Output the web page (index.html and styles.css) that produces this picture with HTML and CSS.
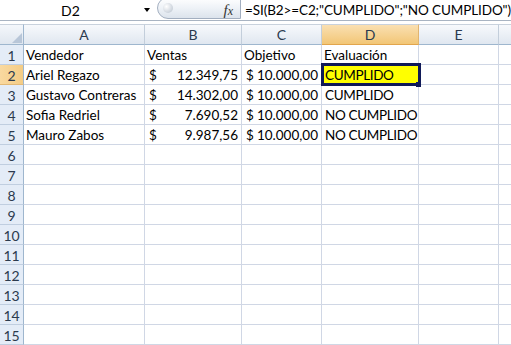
FILE: index.html
```html
<!DOCTYPE html>
<html lang="es">
<head>
<meta charset="utf-8">
<title>Evaluación</title>
<link rel="stylesheet" href="styles.css">
</head>
<body>
<div class="formula-bar">
  <div class="namebox">D2</div>
  <div class="dropdown"></div>
  <div class="fx-pill"><span class="knob"></span><span class="fx"><i>f</i><span class="x">x</span></span></div>
  <div class="formula">=SI(B2&gt;=C2;"CUMPLIDO";"NO CUMPLIDO")</div>
</div>
<div class="sheet">
  <div class="corner"><span class="tri"></span></div>
  <div class="ch">A</div><div class="ch">B</div><div class="ch">C</div><div class="ch sel">D</div><div class="ch">E</div><div class="ch last"></div>

  <div class="rh">1</div><div class="c">Vendedor</div><div class="c">Ventas</div><div class="c">Objetivo</div><div class="c">Evaluación</div><div class="c"></div><div class="c last"></div>
  <div class="rh sel">2</div><div class="c">Ariel Regazo</div><div class="c money"><span>$</span><span>12.349,75</span></div><div class="c money"><span>$</span><span>10.000,00</span></div><div class="c caps active">CUMPLIDO</div><div class="c"></div><div class="c last"></div>
  <div class="rh">3</div><div class="c">Gustavo Contreras</div><div class="c money"><span>$</span><span>14.302,00</span></div><div class="c money"><span>$</span><span>10.000,00</span></div><div class="c caps">CUMPLIDO</div><div class="c"></div><div class="c last"></div>
  <div class="rh">4</div><div class="c">Sofia Redriel</div><div class="c money"><span>$</span><span>7.690,52</span></div><div class="c money"><span>$</span><span>10.000,00</span></div><div class="c caps">NO CUMPLIDO</div><div class="c"></div><div class="c last"></div>
  <div class="rh">5</div><div class="c">Mauro Zabos</div><div class="c money"><span>$</span><span>9.987,56</span></div><div class="c money"><span>$</span><span>10.000,00</span></div><div class="c caps">NO CUMPLIDO</div><div class="c"></div><div class="c last"></div>
  <div class="rh">6</div><div class="c"></div><div class="c"></div><div class="c"></div><div class="c"></div><div class="c"></div><div class="c last"></div>
  <div class="rh">7</div><div class="c"></div><div class="c"></div><div class="c"></div><div class="c"></div><div class="c"></div><div class="c last"></div>
  <div class="rh">8</div><div class="c"></div><div class="c"></div><div class="c"></div><div class="c"></div><div class="c"></div><div class="c last"></div>
  <div class="rh">9</div><div class="c"></div><div class="c"></div><div class="c"></div><div class="c"></div><div class="c"></div><div class="c last"></div>
  <div class="rh">10</div><div class="c"></div><div class="c"></div><div class="c"></div><div class="c"></div><div class="c"></div><div class="c last"></div>
  <div class="rh">11</div><div class="c"></div><div class="c"></div><div class="c"></div><div class="c"></div><div class="c"></div><div class="c last"></div>
  <div class="rh">12</div><div class="c"></div><div class="c"></div><div class="c"></div><div class="c"></div><div class="c"></div><div class="c last"></div>
  <div class="rh">13</div><div class="c"></div><div class="c"></div><div class="c"></div><div class="c"></div><div class="c"></div><div class="c last"></div>
  <div class="rh">14</div><div class="c"></div><div class="c"></div><div class="c"></div><div class="c"></div><div class="c"></div><div class="c last"></div>
  <div class="rh">15</div><div class="c"></div><div class="c"></div><div class="c"></div><div class="c"></div><div class="c"></div><div class="c last"></div>
</div>
</body>
</html>
```

FILE: styles.css
```css
*, *::before, *::after { box-sizing: border-box; }
html, body { margin: 0; padding: 0; background: #fff; }
body {
  width: 511px;
  height: 345px;
  overflow: hidden;
  font-family: Lato, "Liberation Sans", sans-serif;
  font-size: 13.5px;
  color: #000;
}

/* formula bar */
.formula-bar {
  display: flex;
  align-items: center;
  height: 21px;
  border-bottom: 1px solid #a9b4c2;
  margin-bottom: 3px;
  overflow: hidden;
  white-space: nowrap;
}
.formula-bar > * { flex-shrink: 0; }
.namebox { width: 141px; text-align: center; line-height: 17px; font-size: 14px; }
.dropdown {
  width: 16px;
  height: 20px;
  display: flex;
  align-items: center;
  padding-left: 3px;
}
.dropdown::before {
  content: "";
  border-left: 3.5px solid transparent;
  border-right: 3.5px solid transparent;
  border-top: 4px solid #000;
}
.fx-pill {
  align-self: flex-start;
  width: 84px;
  height: 22px;
  margin-top: -3px;
  border: 1px solid #a3afc0;
  border-radius: 11px 0 0 11px;
  background: linear-gradient(#ffffff, #eef2f7 50%, #dce3ec);
  display: flex;
  align-items: center;
  justify-content: space-between;
  padding: 0 7px 0 5px;
}
.knob {
  width: 10px;
  height: 10px;
  border-radius: 50%;
  background: radial-gradient(circle at 35% 35%, #ffffff, #d3d9e1 60%, #b7c0cc);
}
.fx {
  margin-top: 5px;
  font-family: "Liberation Serif", serif;
  font-size: 15px;
  line-height: 14px;
  color: #333;
}
.fx i { font-style: italic; }
.fx .x { font-style: italic; font-size: 12px; }
.formula { padding-left: 4px; line-height: 17px; letter-spacing: -0.1px; }

/* sheet */
.sheet {
  display: grid;
  grid-template-columns: 24px 121px 97px 80px 97px 80px 1fr;
  grid-template-rows: 21px repeat(15, 20px);
}
.sheet > div {
  display: flex;
  align-items: flex-end;
  border-right: 1px solid #d0d7e5;
  border-bottom: 1px solid #d0d7e5;
  line-height: 17px;
  white-space: nowrap;
  padding: 0 2px;
}
.sheet > .last { border-right: none; }

.corner {
  border-top: 1px solid #c9d2dd;
  border-right-color: #9eb6ce !important;
  border-bottom-color: #9eb6ce !important;
  background: linear-gradient(#f4f7fb, #dfe6ef);
  justify-content: flex-end;
  padding: 0 1px 1px 0 !important;
}
.tri {
  width: 0;
  height: 0;
  border-left: 10px solid transparent;
  border-bottom: 10px solid #b8c6d8;
}

.ch {
  border-top: 1px solid #c9d2dd;
  border-right-color: #c3cedb !important;
  border-bottom-color: #9eb6ce !important;
  background: linear-gradient(#f7f9fc, #e0e7f0);
  justify-content: center;
  align-items: center !important;
  color: #2c3a4e;
  font-size: 14px;
}
.ch.sel {
  background: linear-gradient(#fae0b2, #f2c676);
  border-bottom-color: #e2a54c !important;
  border-right-color: #e1b570 !important;
}

.rh {
  background: #e4ecf7;
  border-right-color: #9eb6ce !important;
  border-bottom-color: #c0cee0 !important;
  justify-content: center;
  color: #2c3a4e;
  font-size: 14px;
}
.rh.sel {
  background: linear-gradient(90deg, #f9d9a0, #f4cc85);
  border-bottom-color: #e3b977 !important;
}

.money { justify-content: space-between; padding: 0 3px 0 4px !important; }
.caps { letter-spacing: -0.35px; padding-left: 3px !important; }

.active {
  position: relative;
  background: #ffff00;
}
.active::before {
  content: "";
  position: absolute;
  left: -1px;
  top: -2px;
  width: 100px;
  height: 23px;
  border: 3px solid #101a58;
  z-index: 2;
}
.active::after {
  content: "";
  position: absolute;
  left: 94px;
  top: 17px;
  width: 5px;
  height: 5px;
  background: #101a58;
  z-index: 3;
}
```
